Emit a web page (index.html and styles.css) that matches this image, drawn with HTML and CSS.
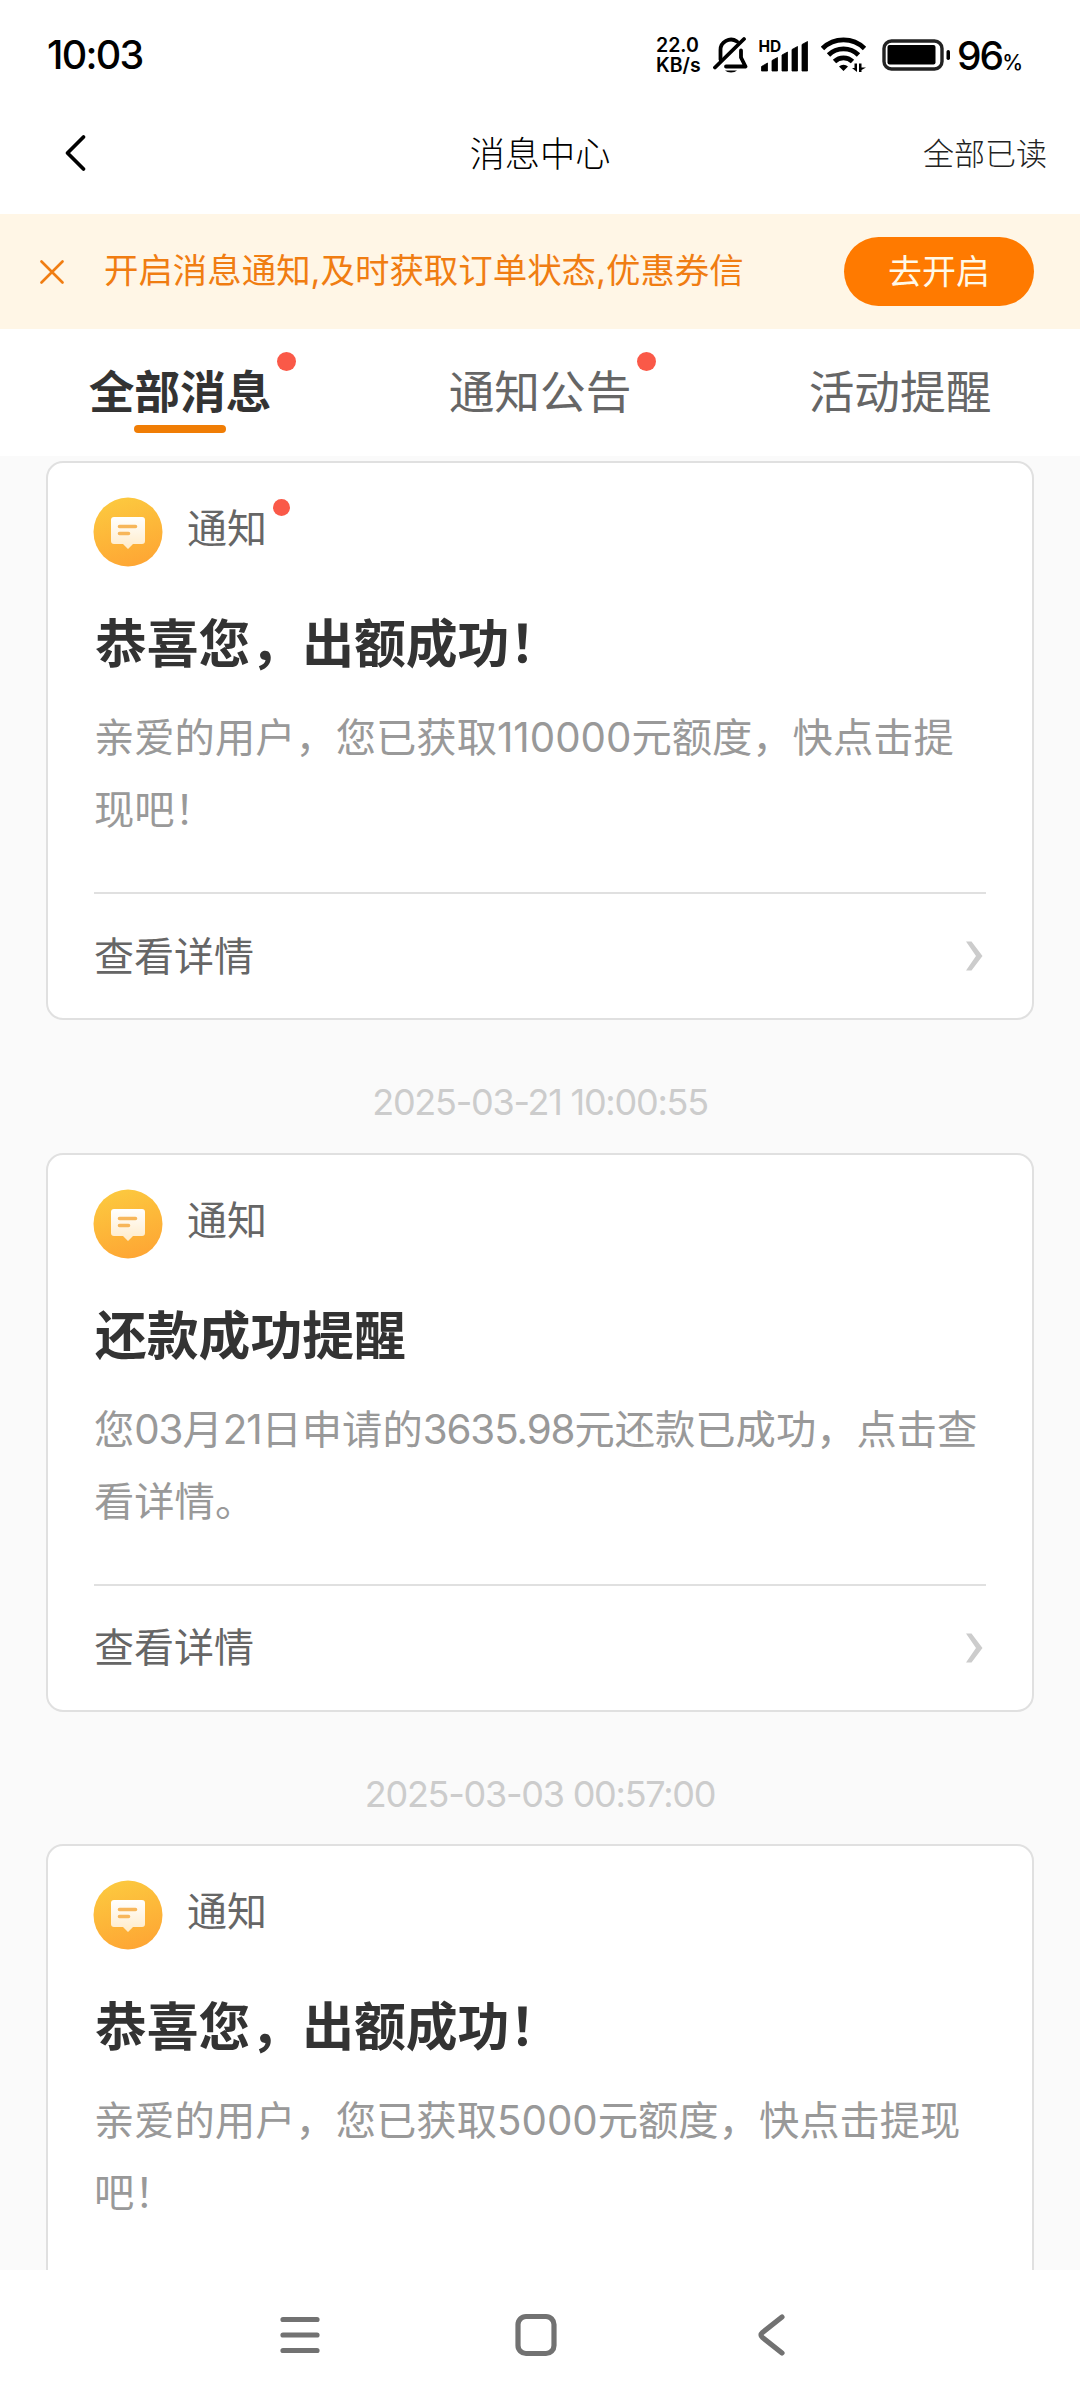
FILE: index.html
```html
<!DOCTYPE html>
<html lang="zh-CN">
<head>
<meta charset="utf-8">
<title>消息中心</title>
<link rel="stylesheet" href="styles.css">
</head>
<body>
<svg class="defs" aria-hidden="true">
  <defs>
    <linearGradient id="coin" x1="0.3" y1="0" x2="0.6" y2="1"><stop offset="0" stop-color="#fcc93f"/><stop offset="1" stop-color="#fea634"/></linearGradient>
    <linearGradient id="paper" x1="0" y1="0" x2="0" y2="1"><stop offset="0" stop-color="#ffffff"/><stop offset="1" stop-color="#ffebc8"/></linearGradient>
    <symbol id="notice" viewBox="0 0 70 70">
      <circle cx="35" cy="35" r="34.5" fill="url(#coin)"/>
      <path d="M21 20h28a3 3 0 0 1 3 3v21a3 3 0 0 1-3 3h-9l-5 5-5-5h-9a3 3 0 0 1-3-3V23a3 3 0 0 1 3-3z" fill="url(#paper)"/>
      <path d="M26.5 29.5h16M26.5 36.5h9" stroke="#f7b65a" stroke-width="3.6" stroke-linecap="round"/>
    </symbol>
    <symbol id="more" viewBox="0 0 18 30"><path d="M1 .5h5.500L17.500 15 6.500 29.500H1L11 15z" fill="#ccc"/></symbol>
  </defs>
</svg>
<div class="screen">
  <header class="status">
    <div class="clock">10:03</div>
    <div class="indicators">
      <div class="speed"><span>22.0</span><span>KB/s</span></div>
      <svg class="bell" width="36" height="38" viewBox="0 0 36 38">
        <path d="M7.500 23.500V14.500a10.500 10.500 0 0 1 16.500-9M28 14.500v7l4.500 9H13" fill="none" stroke="#000" stroke-width="3.800" stroke-linejoin="round" stroke-linecap="round"/>
        <path d="M2 31.500L31 3" stroke="#000" stroke-width="3.800" stroke-linecap="round"/>
        <path d="M12 34.500h12a7 4 0 0 1-12 0z"/>
      </svg>
      <svg class="signal" width="50" height="34" viewBox="0 0 50 34">
        <text x="-.5" y="13.500" class="hd">HD</text>
        <path d="M2.500 28.500l6-3.500v8h-6zM13 22.500l5.500-3v13.500H13zM23 17l5.500-3v19H23zM33 11.500l5.500-3V33H33zM43 6.500l5.500-3V33H43z" stroke="#000" stroke-width=".8" stroke-linejoin="round"/>
      </svg>
      <svg class="wifi" width="46" height="36" viewBox="0 0 46 36">
        <g fill="none" stroke="#000" stroke-width="4.800"><path d="M1.500 11.500a30 30 0 0 1 42 0"/><path d="M7.500 18a21.500 21.500 0 0 1 30 0"/><path d="M13.500 24.500a13 13 0 0 1 18 0"/></g>
        <path d="M18 29.500a6.500 6.500 0 0 1 9 0l-4.500 4.500zM36 26.500v8.500l-5-4h2.500v-4.500zM38 35V26.500h2.500v4H45l-4.500 2.500v2z"/>
      </svg>
      <svg class="battery" width="70" height="34" viewBox="0 0 70 34">
        <rect x="2" y="3" width="58" height="28" rx="7.500" fill="none" stroke="#222" stroke-width="3.400"/>
        <rect x="5.500" y="7" width="48" height="19.500" rx="2"/>
        <rect x="64.500" y="12" width="3.500" height="10" rx="1.700"/>
      </svg>
      <div class="percent">96<small>%</small></div>
    </div>
  </header>

  <nav class="titlebar">
    <svg class="back" width="24" height="38" viewBox="0 0 24 38"><path d="M20.500 3L4.500 19l16 16" fill="none" stroke="#000" stroke-width="3.800" stroke-linecap="round" stroke-linejoin="round"/></svg>
    <h1>消息中心</h1>
    <a class="readall">全部已读</a>
  </nav>

  <section class="banner">
    <svg class="close" width="24" height="24" viewBox="0 0 24 24"><path d="M1.500 1.500l21 21M22.500 1.500l-21 21" stroke="#f07d12" stroke-width="2.600" stroke-linecap="round"/></svg>
    <p>开启消息通知,及时获取订单状态,优惠券信</p>
    <button>去开启</button>
  </section>

  <nav class="tabs">
    <a class="tab active"><span>全部消息<i class="dot"></i></span></a>
    <a class="tab"><span>通知公告<i class="dot"></i></span></a>
    <a class="tab"><span>活动提醒</span></a>
  </nav>

  <main class="feed">
    <article class="card">
      <div class="kind"><svg class="coin"><use href="#notice"/></svg><span>通知<i class="dot"></i></span></div>
      <h2>恭喜您，出额成功！</h2>
      <p>亲爱的用户，您已获取110000元额度，快点击提<br>现吧！</p>
      <a class="detail"><span>查看详情</span><svg class="more"><use href="#more"/></svg></a>
    </article>
    <time>2025-03-21 10:00:55</time>
    <article class="card">
      <div class="kind"><svg class="coin"><use href="#notice"/></svg><span>通知</span></div>
      <h2>还款成功提醒</h2>
      <p>您<b>03</b>月<b>21</b>日申请的<b>3635.98</b>元还款已成功，点击查<br>看详情。</p>
      <a class="detail"><span>查看详情</span><svg class="more"><use href="#more"/></svg></a>
    </article>
    <time>2025-03-03 00:57:00</time>
    <article class="card">
      <div class="kind"><svg class="coin"><use href="#notice"/></svg><span>通知</span></div>
      <h2>恭喜您，出额成功！</h2>
      <p>亲爱的用户，您已获取5000元额度，快点击提现<br>吧！</p>
    </article>
  </main>

  <footer class="softkeys">
    <svg width="44" height="44" viewBox="0 0 44 44"><path d="M5 6.500h34M5 22h34M5 37.500h34"/></svg>
    <svg width="44" height="44" viewBox="0 0 44 44"><rect x="4" y="3.500" width="36" height="37" rx="8"/></svg>
    <svg width="44" height="44" viewBox="0 0 44 44"><path d="M32 4L12.500 19.500q-3 2.500 0 5L32 40"/></svg>
  </footer>
</div>
</body>
</html>
```
FILE: styles.css
```css
* { box-sizing: border-box; }
body { margin: 0; background: #fff; font-family: Inter, "Noto Sans CJK SC", sans-serif; }
h1, h2, p { margin: 0; font-weight: 400; }
.defs { display: block; width: 0; height: 0; }
.screen { width: 1080px; height: 2400px; display: flex; flex-direction: column; overflow: hidden; }

.status { height: 92px; padding: 17px 59px 0 47px; display: flex; justify-content: space-between; align-items: flex-start; color: #000; }
.clock { font-size: 39.500px; font-weight: 500; line-height: 76px; letter-spacing: -1.700px; }
.indicators { display: flex; align-items: center; height: 76px; }
.speed { width: 57px; display: flex; flex-direction: column; font-size: 19.500px; line-height: 20px; font-weight: 600; letter-spacing: 0; }
.bell { margin-right: 10px; }
.signal { margin-right: 12px; }
.hd { font: 700 15.500px Inter, sans-serif; }
.wifi { margin-right: 15px; }
.battery { margin-right: 5px; }
.percent { width: 64px; font-size: 39px; font-weight: 500; letter-spacing: -2px; white-space: nowrap; }
.percent small { font-size: 21px; letter-spacing: 0; }

.titlebar { height: 122px; padding: 0 33px; display: grid; grid-template-columns: 1fr auto 1fr; align-items: center; color: #000; }
.titlebar h1 { font-size: 35.200px; font-weight: 300; padding-bottom: 4px; }
.back { display: block; margin-left: 30px; }
.readall { justify-self: end; padding-bottom: 3px; font-size: 31px; font-weight: 300; color: #222; }

.banner { height: 115px; padding: 0 46px 0 40px; display: flex; align-items: center; background: #fff6e6; }
.banner p { margin-left: 40px; flex: 1; font-size: 34.450px; line-height: 50px; padding-bottom: 1px; color: #f07d12; white-space: nowrap; }
.banner button { width: 190px; height: 69px; padding: 0 0 4px; border: 0; border-radius: 35px; background: #ff7a00; color: #fff9e8; font: 400 34px Inter, "Noto Sans CJK SC", sans-serif; }

.tabs { height: 127px; display: grid; grid-template-columns: repeat(3, 1fr); }
.tab { display: flex; flex-direction: column; align-items: center; padding-top: 32px; font-size: 45.700px; line-height: 64px; color: #666; }
.tab span, .kind span { position: relative; }
.active { color: #333; font-weight: 700; }
.active::after { content: ""; width: 92px; height: 8px; border-radius: 4px; background: #f07d05; }
.dot { position: absolute; width: 19px; height: 19px; border-radius: 50%; background: #fa5948; }
.tab .dot { right: -25px; top: -9px; }

.feed { flex: 1; min-height: 0; overflow: hidden; background: #fafafa; padding: 5px 46px 0; display: flex; flex-direction: column; }
.card { flex: none; height: 559px; border: 2px solid #e0e0e0; border-radius: 17px; background: #fff; padding: 34px 46px 0; display: flex; flex-direction: column; }
.kind { height: 70px; display: flex; gap: 24px; font-size: 40px; line-height: 63px; color: #666; }
.coin { width: 70px; height: 70px; margin-left: -1px; }
.kind .dot { width: 17px; height: 17px; right: -23px; top: 2px; }
.card h2 { margin: 39px 0 0 1px; font-size: 51.800px; line-height: 76px; font-weight: 700; color: #333; }
.card p { margin-top: 20px; height: 190px; font-size: 40.300px; line-height: 72px; color: #999; white-space: nowrap; }
.card b { font-weight: 400; letter-spacing: -1.100px; }
.detail { border-top: 2px solid #e0e0e0; height: 126px; padding-right: 3px; display: flex; justify-content: space-between; align-items: center; font-size: 40px; color: #666; }
.detail span { padding-bottom: 5px; }
.more { width: 18px; height: 30px; }
time { flex: none; height: 132.500px; padding-top: 32px; line-height: 100px; text-align: center; font-size: 36px; letter-spacing: -1.250px; color: #ccc; }

.softkeys { height: 130px; padding: 43px 0 0 278px; display: flex; gap: 192px; }
.softkeys svg { fill: none; stroke: #727272; stroke-width: 5.200px; stroke-linecap: round; stroke-linejoin: round; }
```
